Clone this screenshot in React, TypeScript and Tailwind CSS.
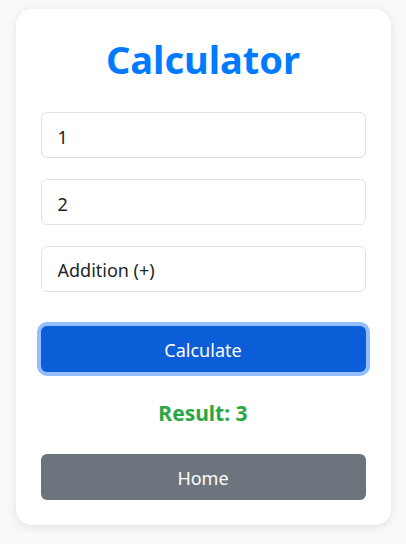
import { useState } from 'react';

export default function App() {
  const [a, setA] = useState('1');
  const [b, setB] = useState('2');
  const [op, setOp] = useState('add');
  const [result, setResult] = useState<number | null>(3);

  const calc = () => {
    const x = parseFloat(a);
    const y = parseFloat(b);
    if (op === 'add') setResult(x + y);
    if (op === 'sub') setResult(x - y);
    if (op === 'mul') setResult(x * y);
    if (op === 'div') setResult(x / y);
  };

  return (
    <div className="min-h-[544px] bg-[#f8f9fa] pt-[9px] font-['Noto_Sans',sans-serif]">
      <div className="mx-auto w-[375px] rounded-2xl bg-white px-[25px] pb-[25px] pt-[28px] shadow-[0_2px_10px_rgba(0,0,0,0.1)]">
        <h1 className="mb-[31px] text-center text-[38px] font-bold leading-[44px] text-[#007bff]">Calculator</h1>

        <div className="flex flex-col gap-[21px]">
          <input
            value={a}
            onChange={(e) => setA(e.target.value)}
            className="h-[46px] w-full rounded-md border border-[#dee2e6] px-4 pt-[3px] text-[18px] text-[#212529] outline-none"
          />
          <input
            value={b}
            onChange={(e) => setB(e.target.value)}
            className="h-[46px] w-full rounded-md border border-[#dee2e6] px-4 pt-[3px] text-[18px] text-[#212529] outline-none"
          />
          <select
            value={op}
            onChange={(e) => setOp(e.target.value)}
            className="h-[46px] w-full appearance-none rounded-md border border-[#dee2e6] bg-white px-4 pt-[3px] text-[18px] text-[#212529] outline-none"
          >
            <option value="add">Addition (+)</option>
            <option value="sub">Subtraction (-)</option>
            <option value="mul">Multiplication (×)</option>
            <option value="div">Division (÷)</option>
          </select>
        </div>

        <button
          onClick={calc}
          className="mt-[34px] h-[46px] w-full rounded-md bg-[#0b5ed7] pt-[3px] text-[18px] text-white shadow-[0_0_0_4px_rgba(13,110,253,0.45)]"
        >
          Calculate
        </button>

        {result !== null && (
          <p className="mt-[25px] text-center text-[21px] font-bold leading-[32px] text-[#28a745]">Result: {result}</p>
        )}

        <button className="mt-[25px] h-[46px] w-full rounded-md bg-[#6c757d] pt-[3px] text-[18px] text-white">Home</button>
      </div>
    </div>
  );
}
